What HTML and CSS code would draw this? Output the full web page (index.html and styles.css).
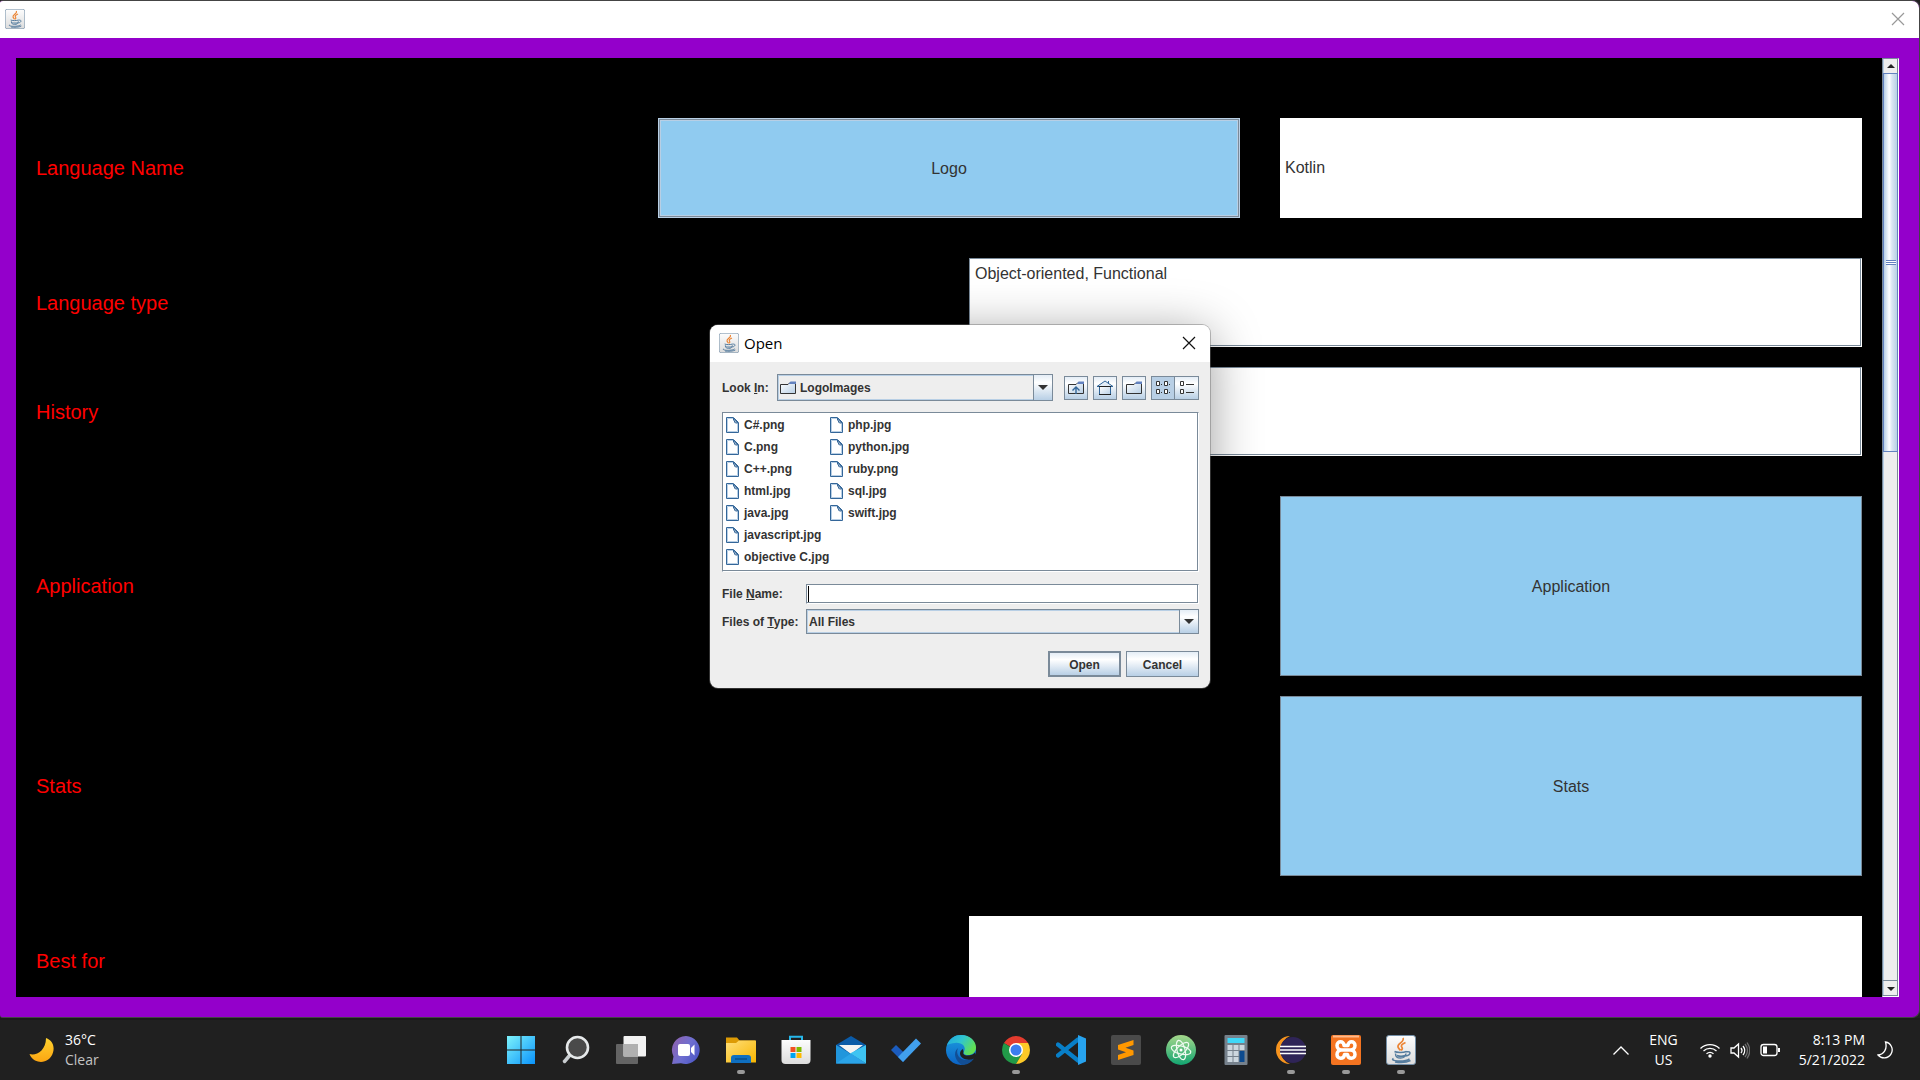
FILE: index.html
```html
<!DOCTYPE html>
<html lang="en">
<head>
<meta charset="utf-8">
<title>Language editor</title>
<link rel="stylesheet" href="styles.css">
</head>
<body>
<svg class="defs" aria-hidden="true">
  <defs>
    <linearGradient id="tile" x1="0" y1="0" x2="0" y2="1"><stop offset="0" stop-color="#fdfdfd"/><stop offset="1" stop-color="#dcdcdc"/></linearGradient>
    <linearGradient id="win" x1="0" y1="0" x2="1" y2="1"><stop offset="0" stop-color="#7df3fb"/><stop offset="1" stop-color="#0a93fb"/></linearGradient>
    <linearGradient id="chat" x1="0" y1="0.2" x2="1" y2="0.8"><stop offset="0" stop-color="#8f62b0"/><stop offset="0.5" stop-color="#6f6fd0"/><stop offset="1" stop-color="#4a55c4"/></linearGradient>
    <linearGradient id="folder" x1="0" y1="0" x2="1" y2="1"><stop offset="0" stop-color="#ffdf7a"/><stop offset="1" stop-color="#f7b500"/></linearGradient>
    <linearGradient id="edgeTop" x1="0" y1="0" x2="1" y2="0.5"><stop offset="0" stop-color="#1fa5e0"/><stop offset="0.5" stop-color="#30c5d0"/><stop offset="1" stop-color="#62e052"/></linearGradient>
    <linearGradient id="edgeLow" x1="0" y1="0" x2="0" y2="1"><stop offset="0" stop-color="#1c9de0"/><stop offset="1" stop-color="#0b62c4"/></linearGradient>
    <linearGradient id="atom" x1="0" y1="0" x2="0" y2="1"><stop offset="0" stop-color="#a5d78b"/><stop offset="1" stop-color="#12a571"/></linearGradient>
    <linearGradient id="moon" x1="0" y1="0" x2="0" y2="1"><stop offset="0" stop-color="#ffd22e"/><stop offset="1" stop-color="#fba512"/></linearGradient>
    <linearGradient id="sheen" x1="0" y1="0" x2="1" y2="1"><stop offset="0" stop-color="#ffffff"/><stop offset="1" stop-color="#b8cfe5"/></linearGradient>
  </defs>
  <symbol id="java" viewBox="0 0 30 30">
    <rect x="0.5" y="0.5" width="29" height="29" rx="2.5" fill="url(#tile)" stroke="#7590a8"/>
    <path d="M17 3c2 4-6 5.500-5 9 .4 1.600 2 2.500 2.500 3.500M19.500 7.500c-4 1.800-5 3-3.500 5 .9 1.200 0 2.200-.8 3" fill="none" stroke="#ec8535" stroke-width="1.700"/>
    <path d="M8.500 16.500c2 1.200 9 1.200 12 0M9.500 18.500c0 4 2 4.500 5 4.500s5-.5 5.500-4.500M20.500 16.800c5-1 4.500 3.500-.8 4.200M11 20.500c2 .8 6 .8 8 0M7.500 23.500c-5 2.500 11 4 16 .3M9 27c5 .8 12 .4 15.500-1.500" fill="none" stroke="#557c9e" stroke-width="1.500"/>
  </symbol>
  <symbol id="file" viewBox="0 0 13 16">
    <path d="M.5 .5h7l5 5v10h-12z" fill="#fff" stroke="#336699"/>
    <path d="M1.500 15V1.500H7M11.500 7v7.500H2" fill="none" stroke="#b8cfe5"/>
    <path d="M7.500 1v2l1 1v1l1 1h2.500z" fill="#a3b8cc" stroke="#336699"/>
  </symbol>
  <symbol id="dir" viewBox="0 0 16 13">
    <path d="M.5 3.500H8l2-2h5.500v11H.5z" fill="url(#sheen)" stroke="#333"/>
    <path d="M8.500 3L10.500 .5H16V3z" fill="#6382bf"/>
  </symbol>
</svg>

<main class="window">
  <header class="titlebar">
    <svg class="java-small"><use href="#java"/></svg>
    <button class="close close-dim" type="button" aria-label="Close window"><svg viewBox="0 0 12 12"><path d="M0 0L12 12M12 0L0 12"/></svg></button>
  </header>
  <div class="frame">
    <form class="form">
      <div class="row row-thirds h-tall">
        <label for="lang-name">Language Name</label>
        <button class="action focused" type="button">Logo</button>
        <input class="field" id="lang-name" type="text" value="Kotlin">
      </div>
      <div class="group">
        <div class="row row-halves">
          <label for="lang-type">Language type</label>
          <textarea class="area" id="lang-type">Object-oriented, Functional</textarea>
        </div>
        <div class="row row-halves">
          <label for="history">History</label>
          <textarea class="area" id="history"></textarea>
        </div>
      </div>
      <div class="group">
        <div class="row row-thirds h-big">
          <label for="app-btn">Application</label>
          <button class="action last" id="app-btn" type="button">Application</button>
        </div>
        <div class="row row-thirds h-big">
          <label for="stats-btn">Stats</label>
          <button class="action last" id="stats-btn" type="button">Stats</button>
        </div>
      </div>
      <div class="row row-halves">
        <label for="best">Best for</label>
        <input class="field" id="best" type="text">
      </div>
    </form>
    <div class="scrollbar">
      <button class="sb-btn" type="button" aria-label="Scroll up"><svg viewBox="0 0 8 4"><path d="M0 4L4 0L8 4z"/></svg></button>
      <div class="thumb"><span class="grip"></span></div>
      <div class="track"></div>
      <button class="sb-btn sb-down" type="button" aria-label="Scroll down"><svg viewBox="0 0 8 4"><path d="M0 0L4 4L8 0z"/></svg></button>
    </div>
  </div>
</main>

<section class="dialog" role="dialog" aria-label="Open">
  <header class="dialog-title">
    <svg class="java-small"><use href="#java"/></svg>
    <span>Open</span>
    <button class="close" type="button" aria-label="Close dialog"><svg viewBox="0 0 12 12"><path d="M0 0L12 12M12 0L0 12"/></svg></button>
  </header>
  <div class="dialog-body">
    <div class="look">
      <label for="look-in">Look <u>I</u>n:</label>
      <div class="combo combo-look">
        <svg class="dir"><use href="#dir"/></svg>
        <select id="look-in"><option>LogoImages</option></select>
        <span class="arrow"><svg viewBox="0 0 10 5"><path d="M0 0H10L5 5z"/></svg></span>
      </div>
      <div class="tools">
        <button class="tool" type="button" aria-label="Up one level"><svg viewBox="0 0 16 16"><path d="M.5 4.500H8l2-2h5.500v11H.5z" fill="url(#sheen)" stroke="#333"/><path d="M9 4L10.500 1.500H16V4z" fill="#6382bf"/><path d="M8 14V8M4.500 10.500L8 7l3.500 3.500" fill="none" stroke="#336699" stroke-width="1.400"/></svg></button>
        <button class="tool" type="button" aria-label="Home"><svg viewBox="0 0 16 16"><path d="M2.500 7v7.500h11V7" fill="url(#sheen)" stroke="#336699"/><path d="M0 6.500L8 1l8 5.500M11.500 1v2.500M0 6.500h16" fill="#e4eef8" stroke="#336699"/><path d="M2 6.500h12M2 14.500h12" stroke="#222"/></svg></button>
        <button class="tool" type="button" aria-label="New folder"><svg viewBox="0 0 16 16"><path d="M.5 4.500H8l2-2h5.500v11H.5z" fill="url(#sheen)" stroke="#333"/><path d="M9 4L10.500 1.500H16V4z" fill="#6382bf"/></svg></button>
        <div class="toggle">
          <button class="tool pressed" type="button" aria-label="List"><svg viewBox="0 0 16 16"><path d="M1.500 1.500h3v4h-3zM9.500 1.500h3v4h-3zM1.500 9.500h3v4h-3zM9.500 9.500h3v4h-3z" fill="#fff" stroke="#333"/><path d="M6 4.500h1M14 4.500h1M6 12.500h1M14 12.500h1" stroke="#333"/></svg></button>
          <button class="tool" type="button" aria-label="Details"><svg viewBox="0 0 16 16"><path d="M1.500 1.500h3v4h-3zM1.500 9.500h3v4h-3z" fill="#fff" stroke="#333"/><path d="M7 4.500h8M7 12.500h8" stroke="#333"/></svg></button>
        </div>
      </div>
    </div>
    <ul class="files">
      <li><svg><use href="#file"/></svg>C#.png</li>
      <li><svg><use href="#file"/></svg>C.png</li>
      <li><svg><use href="#file"/></svg>C++.png</li>
      <li><svg><use href="#file"/></svg>html.jpg</li>
      <li><svg><use href="#file"/></svg>java.jpg</li>
      <li><svg><use href="#file"/></svg>javascript.jpg</li>
      <li><svg><use href="#file"/></svg>objective C.jpg</li>
      <li><svg><use href="#file"/></svg>php.jpg</li>
      <li><svg><use href="#file"/></svg>python.jpg</li>
      <li><svg><use href="#file"/></svg>ruby.png</li>
      <li><svg><use href="#file"/></svg>sql.jpg</li>
      <li><svg><use href="#file"/></svg>swift.jpg</li>
    </ul>
    <div class="pair">
      <label for="file-name">File <u>N</u>ame:</label>
      <div class="name-box"><span class="caret"></span><input id="file-name" type="text"></div>
      <label for="file-type">Files of <u>T</u>ype:</label>
      <div class="combo">
        <select id="file-type"><option>All Files</option></select>
        <span class="arrow"><svg viewBox="0 0 10 5"><path d="M0 0H10L5 5z"/></svg></span>
      </div>
    </div>
    <div class="buttons">
      <button class="metal default" type="button">Open</button>
      <button class="metal" type="button">Cancel</button>
    </div>
  </div>
</section>

<footer class="taskbar">
  <div class="weather">
    <svg viewBox="0 0 26 26"><path d="M17 1c6 2 9 8 7 14.500C21.500 24 13 27 6 23.500 3.500 22 1.500 20 .5 17 7 19 17 14 17 1z" fill="url(#moon)"/></svg>
    <div><div>36°C</div><div class="dim">Clear</div></div>
  </div>
  <nav class="apps">
    <button type="button" aria-label="Start"><svg viewBox="0 0 30 30"><path d="M1 1h13.500v13.500H1zM15.500 1H29v13.500H15.500zM1 15.500h13.500V29H1zM15.500 15.500H29V29H15.500z" fill="url(#win)"/></svg></button>
    <button type="button" aria-label="Search"><svg viewBox="0 0 30 30"><path d="M9 20L3.500 26.500" stroke="#c9cdd0" stroke-width="3.500" stroke-linecap="round"/><circle cx="16.500" cy="12.500" r="10.500" fill="#4a4a4a" stroke="#e6e9ea" stroke-width="2.600"/></svg></button>
    <button type="button" aria-label="Task view"><svg viewBox="0 0 30 30"><rect y="9" width="22" height="20" rx="1" fill="#646464"/><rect x="7.500" y="1" width="22.500" height="20.500" rx="1" fill="#f2f2f2"/><rect x="7.500" y="9" width="14.500" height="12.500" fill="#b0b0b0"/></svg></button>
    <button type="button" aria-label="Chat"><svg viewBox="0 0 30 30"><path d="M15 1a14 14 0 1 1-5 27.200L1 29l1.500-7.500A14 14 0 0 1 15 1z" fill="url(#chat)"/><rect x="7" y="9" width="12" height="12" rx="2" fill="#fff"/><path d="M20 13l3.500-3.500v11L20 17z" fill="#fff"/></svg></button>
    <button class="running" type="button" aria-label="File Explorer"><svg viewBox="0 0 30 30"><path d="M0 2.500h11l2.500 3H29V14H0z" fill="#dd9b05"/><path d="M0 8h10l3-2.500h17V27.500H0z" fill="url(#folder)"/><path d="M5 28v-5q0-3 3-3h14q3 0 3 3v5z" fill="#0f6fc0"/><path d="M9 24h12" stroke="#094e8c" stroke-width="1.500"/></svg></button>
    <button type="button" aria-label="Store"><svg viewBox="0 0 30 30"><path d="M9 6V1.700h12V6" fill="none" stroke="#26b7ea" stroke-width="2"/><path d="M.5 5h29v20q0 4-4 4h-21q-4 0-4-4z" fill="url(#tile)"/><path d="M9.500 12h5v5h-5z" fill="#f25022"/><path d="M15.500 12h5v5h-5z" fill="#7fba00"/><path d="M9.500 18h5v5h-5z" fill="#00a4ef"/><path d="M15.500 18h5v5h-5z" fill="#ffb900"/></svg></button>
    <button type="button" aria-label="Mail"><svg viewBox="0 0 30 30"><path d="M0 10L15 1l15 9v8H0z" fill="#0a5ba8"/><path d="M3 10h24L15 19z" fill="#f3f3f3"/><path d="M0 10l15 9 15 9.500H0z" fill="#2196dc"/><path d="M30 10v18.500L14 18.500z" fill="#3ec4f2"/><path d="M0 28.500L15 18.500l15 10z" fill="#2ba4e8"/></svg></button>
    <button type="button" aria-label="To Do"><svg viewBox="0 0 30 30"><path d="M0 15l5-5 12 11.500-5 5.500z" fill="#1b5cbe"/><path d="M7 22L25 3.500l5 5L12 27z" fill="#41a0ee"/></svg></button>
    <button type="button" aria-label="Edge"><svg viewBox="0 0 30 30"><circle cx="15" cy="15" r="15" fill="url(#edgeLow)"/><path d="M1 10C4 3 9 0 15 0c9 0 15 6 15 12.500 0 5-4 7.500-8 7.500-3.500 0-5-1.500-4-3.500 3-5-3-9.500-9-8.500C6 8.300 3 9 1 10z" fill="url(#edgeTop)"/><path d="M12 13c-3 6 2 13 10 12 3-.4 5-1.500 6-1.500C25 28 20 30 16 30 10 27 6 18 12 13z" fill="#124e94"/><path d="M17.500 17c-1 2 1 3.500 4 3.500 3.500 0 6-1 7.500-3l1 3-2 3c-6 3-14 0-14-5 0-2 1.500-4 3-4.500z" fill="#202020"/></svg></button>
    <button class="running" type="button" aria-label="Chrome"><svg viewBox="0 0 30 30"><path d="M15 15L2.900 8A14 14 0 0 1 27.100 8z" fill="#e33b2e"/><path d="M15 15h-1L2.900 8A14 14 0 0 0 15 29l6-10z" fill="#219a48"/><path d="M15 8h12.100A14 14 0 0 1 15 29l6-10z" fill="#fdc927"/><circle cx="15" cy="15" r="7" fill="#fff"/><circle cx="15" cy="15" r="5.500" fill="#3b7ded"/></svg></button>
    <button type="button" aria-label="Visual Studio Code"><svg viewBox="0 0 30 30"><path d="M2 9.500L22 25.500M2 20.500L22 4.500" stroke="#087fc8" stroke-width="4.200" stroke-linecap="round"/><path d="M22 0l8 3.500v23L22 30z" fill="#27a3ef"/></svg></button>
    <button type="button" aria-label="Sublime Text"><svg viewBox="0 0 30 30"><rect width="30" height="30" rx="2" fill="#4a4a4a"/><path d="M7 10l15.500-5v5l-8 2.800 8 2.700V20L7 25v-5l8-2.800L7 14.500z" fill="#ff9800"/></svg></button>
    <button type="button" aria-label="Atom"><svg viewBox="0 0 30 30"><circle cx="15" cy="15" r="15" fill="url(#atom)"/><g fill="none" stroke="#effaf0" stroke-width="1.200"><ellipse cx="15" cy="15" rx="4" ry="10" transform="rotate(-15 15 15)"/><ellipse cx="15" cy="15" rx="4" ry="10" transform="rotate(45 15 15)"/><ellipse cx="15" cy="15" rx="4" ry="10" transform="rotate(105 15 15)"/></g><circle cx="15" cy="15" r="1.500" fill="#fff"/></svg></button>
    <button type="button" aria-label="Calculator"><svg viewBox="0 0 30 30"><rect x="3.500" width="23" height="30" rx="1" fill="#76818c"/><rect x="6.500" y="3" width="17" height="5" fill="#3fd8f8"/><path d="M6.500 10h5v5h-5zM12.500 10h5v5h-5zM18.500 10h5v5h-5zM6.500 16h5v5h-5zM12.500 16h5v5h-5zM6.500 22h5v5h-5zM12.500 22h5v5h-5z" fill="#ccd6de"/><path d="M18.500 16h5v11h-5z" fill="#0c4a8e"/></svg></button>
    <button class="running" type="button" aria-label="Eclipse"><svg viewBox="0 0 30 30"><path d="M14 1A14 14 0 0 0 14 29 15 15 0 0 1 14 1z" fill="#f7941e"/><circle cx="17" cy="15" r="13" fill="#2f2457"/><path d="M4 11.500h26M4 15h26M4 18.500h26" stroke="#fff" stroke-width="1.700"/></svg></button>
    <button class="running" type="button" aria-label="XAMPP"><svg viewBox="0 0 30 30"><rect width="30" height="30" rx="2" fill="#f47421"/><path d="M2 1.500h26" stroke="#ffb98a" stroke-width="2"/><path d="M13 10.500C13 5.500 6 5.500 6 10.500c0 2.500 2 4.500 4.500 4.500C8 15 6 17 6 19.500c0 5 7 5 7.500 0h3c.5 5 7.500 5 7.500 0 0-2.500-2-4.500-4.500-4.500 2.500 0 4.500-2 4.500-4.500 0-5-7-5-7 0zM10.500 15h9" fill="none" stroke="#fff" stroke-width="3.500" stroke-linejoin="round"/></svg></button>
    <button class="running" type="button" aria-label="Java"><svg><use href="#java"/></svg></button>
  </nav>
  <div class="tray">
    <svg class="chevron" viewBox="0 0 16 9"><path d="M.5 8.500L8 1l7.500 7.500"/></svg>
    <div class="lang"><div>ENG</div><div>US</div></div>
    <div class="status">
      <svg viewBox="0 0 20 20"><path d="M.5 8.500a13.500 13.500 0 0 1 19 0M3.500 11a9.500 9.500 0 0 1 13 0M6.500 13.800a5.500 5.500 0 0 1 7 0"/><circle cx="10" cy="16" r="1.700" fill="#fff" stroke="none"/></svg>
      <svg viewBox="0 0 20 20"><path d="M1 8v5h3l4.500 4V4L4 8zM11 8q2 2.500 0 5M13 6q3.500 4.500 0 9"/><path d="M15 4q5 6.500 0 13M17 2.500q5.500 8 0 16" opacity="0.350"/></svg>
      <svg viewBox="0 0 20 20"><rect x="1" y="4.500" width="16" height="11" rx="2.500"/><rect x="3" y="6.500" width="4" height="7" fill="#fff" stroke="none"/><path d="M19 8v4" stroke-width="2"/></svg>
    </div>
    <div class="clock"><div>8:13 PM</div><div>5/21/2022</div></div>
    <svg class="focus" viewBox="0 0 18 18"><path d="M8.500 1a8 8 0 1 1-7.500 13C7 13.500 10.500 8 8.500 1z"/></svg>
  </div>
</footer>
</body>
</html>
```
FILE: styles.css
```css
* { box-sizing: border-box; }

body {
  margin: 0;
  height: 100vh;
  display: flex;
  flex-direction: column;
  background: #202020;
  color: #333;
  font-family: "Liberation Sans", Arial, sans-serif;
  font-size: 12px;
  overflow: hidden;
}

button { padding: 0; border: 0; background: none; color: inherit; font: inherit; }
.defs { position: absolute; width: 0; height: 0; }

/* Application window */
.window {
  flex: 1;
  min-height: 0;
  display: flex;
  flex-direction: column;
  overflow: hidden;
  background: #9400cb;
  border-top: 1px solid #444;
  border-right: 1px solid #444;
  border-bottom: 1px solid #444;
  border-radius: 3px 8px 8px 3px;
}

.titlebar {
  flex: none;
  height: 37px;
  display: flex;
  align-items: center;
  justify-content: space-between;
  padding: 0 15px 2px 5px;
  background: #fff;
}

.java-small { width: 20px; height: 20px; }
.close { display: flex; color: #111; }
.close svg { width: 12px; height: 12px; overflow: visible; fill: none; stroke: currentColor; stroke-width: 1.2; }
.close-dim { color: #999; }

.frame {
  flex: 1;
  min-height: 0;
  display: flex;
  margin: 20px 20px 20px 16px;
  background: #000;
}

.form {
  flex: 1;
  min-width: 0;
  display: flex;
  flex-direction: column;
  gap: 40px;
  padding: 60px 20px 0;
  overflow: hidden;
}

.group { flex: none; display: flex; flex-direction: column; gap: 20px; }
.row { flex: none; display: grid; column-gap: 40px; height: 89px; }
.row-thirds { grid-template-columns: repeat(3, 1fr); }
.row-halves { grid-template-columns: repeat(2, 1fr); }
.h-tall { height: 100px; }
.h-big { height: 180px; }

.row label {
  align-self: center;
  color: #f00;
  font-size: 20px;
  line-height: 24px;
}

.action {
  padding-top: 2px;
  background: #90cbf0;
  border: 1px solid #7a8a99;
  font-size: 16px;
}
.action.last { grid-column: 3; }
.action.focused { border: 1px solid #b8cfe5; outline: 1px solid #7a8a99; outline-offset: -2px; box-shadow: inset 0 0 0 2px #b8cfe5; }

.field, .area {
  width: 100%;
  height: 100%;
  margin: 0;
  background: #fff;
  color: #333;
  font: 16px/20px "Liberation Sans", Arial, sans-serif;
  resize: none;
  outline: 0;
}
.field { border: 0; padding: 0 5px; }
.area {
  border: 1px solid #7a8a99;
  border-right-color: #fff;
  border-bottom-color: #fff;
  box-shadow: inset -1px -1px #7a8a99;
  padding: 5px;
}

.scrollbar {
  flex: none;
  width: 17px;
  display: flex;
  flex-direction: column;
  background: #eee;
  border-top: 1px solid #7a8a99;
  border-left: 1px solid #7a8a99;
  border-right: 1px solid #fff;
  border-bottom: 1px solid #fff;
  box-shadow: inset -1px -1px #7a8a99, inset 1px 0 #b8cfe5;
}
.sb-btn { flex: none; height: 14px; display: grid; place-items: center; }
.sb-btn svg { width: 8px; height: 4px; fill: #222; }
.sb-down { height: 16px; border-top: 1px solid #7a8a99; }
.thumb {
  flex: 5;
  display: grid;
  place-items: center;
  border: 1px solid #6382bf;
  background: linear-gradient(to right, #b8cfe5, #fff 40%, #dbe7f3 60%, #b8cfe5);
}
.track { flex: 7; }
.grip {
  width: 10px;
  height: 5px;
  background: repeating-linear-gradient(#6382bf 0 1px, #fff 1px 2px);
}

/* Open dialog, floats over the window */
.dialog {
  position: absolute;
  top: 325px;
  left: 50%;
  width: 500px;
  margin-left: -250px;
  overflow: hidden;
  border-radius: 8px;
  background: #eee;
  box-shadow: 0 0 0 1px rgba(110, 110, 110, 0.45), 0 8px 50px rgba(0, 0, 0, 0.4);
  font-weight: bold;
}

.dialog-title {
  height: 37px;
  display: flex;
  align-items: center;
  gap: 5px;
  padding: 0 15px 2px 9px;
  background: #fff;
  color: #000;
  font: 15px/20px "Open Sans", sans-serif;
}
.dialog-title .close { margin-left: auto; }

.dialog-body {
  display: flex;
  flex-direction: column;
  padding: 12px 11px 11px 12px;
}

.look { display: grid; grid-template-columns: 55px 1fr auto; align-items: center; }

.combo {
  display: flex;
  align-items: stretch;
  height: 25px;
  border: 1px solid #7a8a99;
}
.combo-look { height: 27px; margin-right: 11px; }
.dir { align-self: center; flex: none; width: 16px; height: 13px; margin: 0 0 0 2px; }
.combo select {
  flex: 1;
  min-width: 0;
  appearance: none;
  padding: 0 1px;
  border: 0;
  background: #eee;
  color: #333;
  font: bold 12px/16px "Liberation Sans", Arial, sans-serif;
}
.combo-look select { padding-left: 3px; }
.combo { box-shadow: inset 1px 1px #b8cfe5, inset -1px -1px #b8cfe5; }
.combo select { margin: 1px; }
.arrow, .tool, .metal { background: linear-gradient(#e4edf6, #fff 30%, #b8cfe5); }
.arrow {
  flex: none;
  width: 19px;
  display: grid;
  place-items: center;
  border-left: 1px solid #7a8a99;
}
.arrow svg { width: 10px; height: 5px; fill: #333; }

.tools { display: flex; gap: 5px; }
.toggle { display: flex; }
.tool {
  width: 24px;
  height: 24px;
  display: grid;
  place-items: center;
  border: 1px solid #7a8a99;
}
.tool svg { width: 16px; height: 16px; }
.toggle .tool + .tool { border-left: 0; }
.tool.pressed { background: #b8cfe5; }

.files {
  display: grid;
  grid-template-rows: repeat(7, 22px);
  grid-auto-flow: column;
  grid-auto-columns: 104px;
  height: 160px;
  margin: 11px 0 12px;
  padding: 0 3px;
  list-style: none;
  background: #fff;
  border: 1px solid #7a8a99;
  border-right-color: #fff;
  border-bottom-color: #fff;
  box-shadow: inset -1px -1px #7a8a99;
}
.files li { display: flex; align-items: center; gap: 5px; padding-top: 1px; white-space: nowrap; }
.files svg { flex: none; width: 13px; height: 16px; }

.pair {
  display: grid;
  grid-template-columns: 84px 1fr;
  row-gap: 5px;
  align-items: center;
}
.name-box {
  display: flex;
  height: 20px;
  padding: 1px;
  background: #fff;
  border: 1px solid #7a8a99;
  border-right-color: #fff;
  border-bottom-color: #fff;
  box-shadow: inset -1px -1px #7a8a99;
}
.name-box input { flex: 1; min-width: 0; border: 0; padding: 0 2px; background: none; outline: 0; font: inherit; }
.caret { width: 1px; background: #000; }

.buttons { display: flex; justify-content: flex-end; gap: 5px; margin-top: 17px; }
.metal { width: 73px; height: 26px; padding-top: 1px; border: 1px solid #7a8a99; }
.metal.default { border-width: 2px; }

/* Taskbar */
.taskbar {
  flex: none;
  height: 62px;
  display: grid;
  grid-template-columns: 1fr auto 1fr;
  align-items: center;
  border-top: 2px solid #1a1a1a;
  background: #202020;
  color: #fff;
  font: 14px/20px "Open Sans", sans-serif;
}

.weather { display: flex; align-items: center; gap: 10px; padding-left: 29px; }
.weather svg { width: 26px; height: 26px; }
.dim { color: #c4c4c4; }

.apps { display: flex; padding-left: 2px; }
.apps button { position: relative; width: 55px; height: 60px; display: grid; place-items: center; }
.apps svg { width: 30px; height: 30px; }
.running::after {
  content: "";
  position: absolute;
  bottom: 6px;
  left: 50%;
  width: 8px;
  height: 4px;
  margin-left: -4px;
  border-radius: 2px;
  background: #999;
}

.tray {
  justify-self: end;
  display: flex;
  align-items: center;
  padding-right: 25px;
}
.tray svg { fill: none; stroke: #fff; stroke-width: 1.3; }
.chevron { width: 16px; height: 9px; margin-right: 20px; }
.lang { text-align: center; margin-right: 22px; }
.status { display: flex; gap: 10px; margin-right: 19px; }
.status svg { width: 20px; height: 20px; }
.clock { text-align: right; margin-right: 12px; }
.focus { width: 18px; height: 18px; }
```
